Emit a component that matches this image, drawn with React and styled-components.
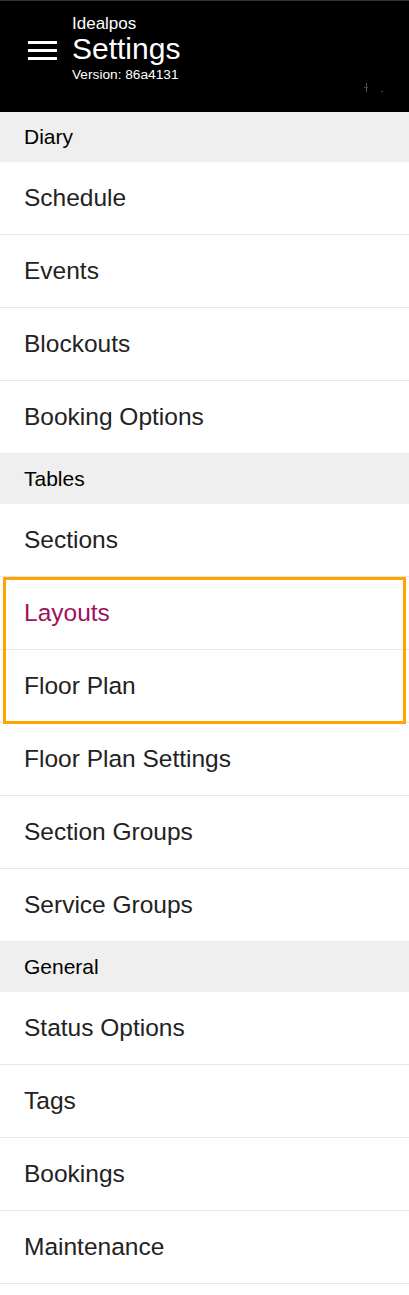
import styled, { createGlobalStyle } from 'styled-components';

const GlobalStyle = createGlobalStyle`
  html, body {
    margin: 0;
    padding: 0;
    background: #fff;
    font-family: "Liberation Sans", Arial, sans-serif;
  }
`

const Page = styled.div`
  width: 409px;
  min-height: 1295px;
  background: #fff;
`

const Header = styled.header`
  height: 112px;
  background: #000;
  border-top: 1px solid #333;
  display: flex;
  align-items: flex-start;
  padding: 13px 0 0 28px;
  box-sizing: border-box;
  position: relative;
`

const Burger = styled.button`
  width: 29px;
  margin-top: 27px;
  padding: 0;
  border: none;
  background: none;
  display: flex;
  flex-direction: column;
  gap: 5px;
  span {
    display: block;
    height: 3px;
    background: #fff;
  }
`

const Titles = styled.div`
  margin-left: 15px;
  color: #fff;
  display: flex;
  flex-direction: column;
`

const AppName = styled.div`
  font-size: 17px;
  line-height: 19px;
`

const Title = styled.h1`
  margin: 0;
  font-weight: normal;
  font-size: 30px;
  line-height: 32px;
`

const Version = styled.div`
  margin-top: 3px;
  font-size: 13.7px;
  line-height: 14px;
`

const Speck = styled.div`
  position: absolute;
  left: 366px;
  top: 82px;
  width: 1px;
  height: 9px;
  background: #555;
  &::before {
    content: '';
    position: absolute;
    left: -2px;
    top: 4px;
    width: 4px;
    height: 1px;
    background: #444;
  }
  &::after {
    content: '';
    position: absolute;
    left: 15px;
    top: 8px;
    width: 2px;
    height: 1px;
    background: #444;
  }
`

const SectionHeader = styled.div`
  height: 50px;
  background: #efefef;
  color: #000;
  font-size: 21px;
  display: flex;
  align-items: center;
  padding-left: 24px;
`

const Row = styled.a`
  height: 72px;
  display: flex;
  align-items: center;
  padding-left: 24px;
  border-bottom: 1px solid #e8e8e8;
  font-size: 24.5px;
  color: ${p => (p.$active ? '#a0115e' : '#222')};
  text-decoration: none;
`

const Highlight = styled.div`
  position: relative;
  &::after {
    content: '';
    position: absolute;
    top: 0;
    bottom: -1px;
    left: 3px;
    right: 3px;
    border: 3px solid #ffa500;
    pointer-events: none;
  }
`

const groups = [
  { title: 'Diary', items: ['Schedule', 'Events', 'Blockouts', 'Booking Options'] },
  {
    title: 'Tables',
    items: ['Sections', ['Layouts', 'Floor Plan'], 'Floor Plan Settings', 'Section Groups', 'Service Groups'],
  },
  { title: 'General', items: ['Status Options', 'Tags', 'Bookings', 'Maintenance'] },
]

const App = () => {
  return (
    <Page>
      <GlobalStyle />
      <Header>
        <Burger aria-label="menu">
          <span />
          <span />
          <span />
        </Burger>
        <Titles>
          <AppName>Idealpos</AppName>
          <Title>Settings</Title>
          <Version>Version: 86a4131</Version>
        </Titles>
        <Speck />
      </Header>
      {groups.map(g => (
        <div key={g.title}>
          <SectionHeader>{g.title}</SectionHeader>
          {g.items.map(item =>
            Array.isArray(item) ? (
              <Highlight key={item[0]}>
                <Row $active>{item[0]}</Row>
                <Row>{item[1]}</Row>
              </Highlight>
            ) : (
              <Row key={item}>{item}</Row>
            )
          )}
        </div>
      ))}
    </Page>
  )
}

export default App
